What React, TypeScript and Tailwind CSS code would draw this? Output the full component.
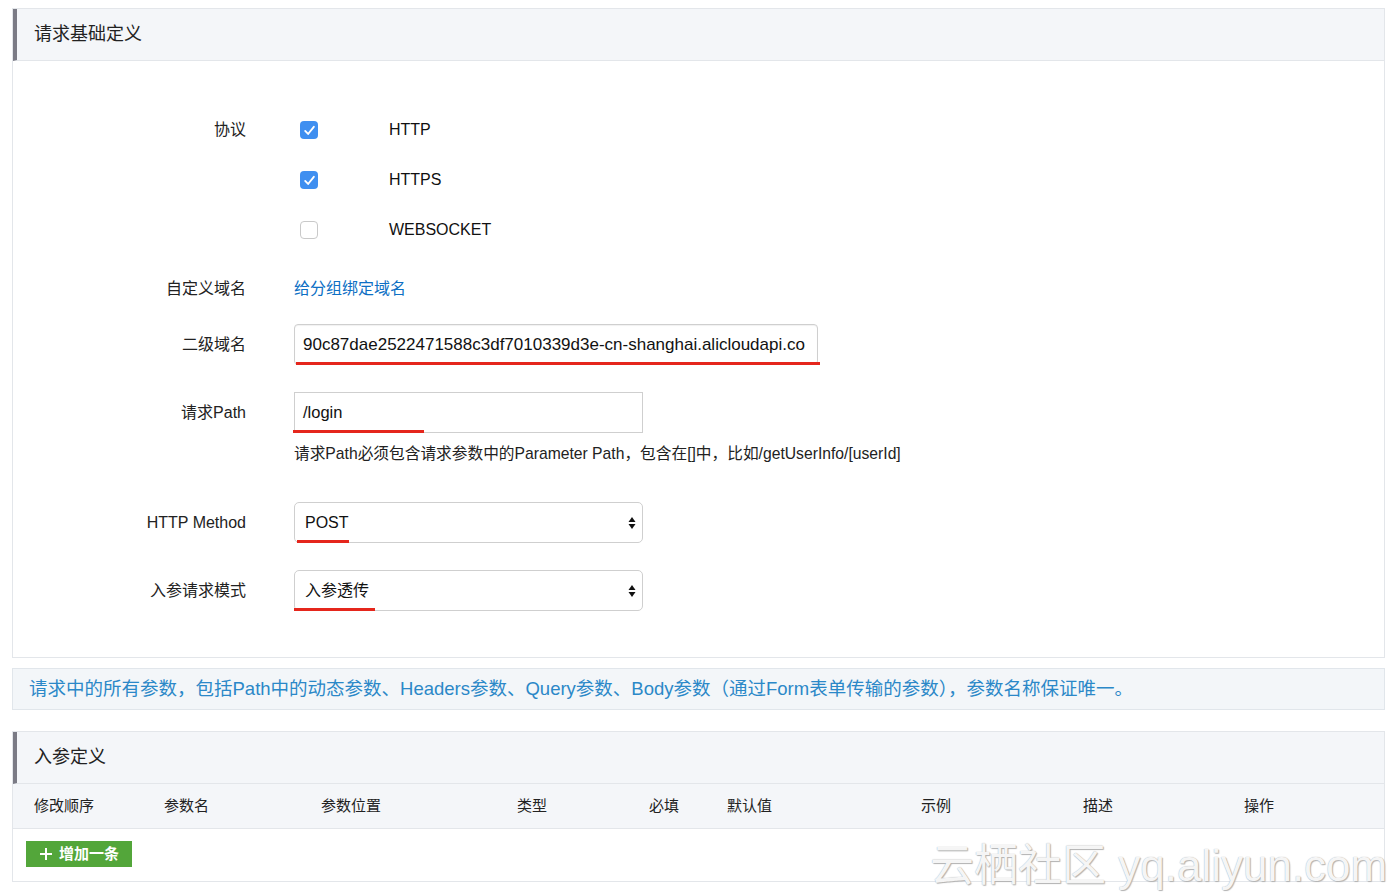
const FONT = "font-['Liberation_Sans','Noto_Sans_CJK_SC',sans-serif]";

const PROTOCOLS = [
  { name: 'HTTP', checked: true },
  { name: 'HTTPS', checked: true },
  { name: 'WEBSOCKET', checked: false },
];

const COLUMNS = ['修改顺序', '参数名', '参数位置', '类型', '必填', '默认值', '示例', '描述', '操作'];

function Checkbox({ checked }: { checked: boolean }) {
  if (!checked) {
    return <span className="block h-[18px] w-[18px] rounded-[4px] border border-[#c9c9c9] bg-white" />;
  }
  return (
    <span className="flex h-[18px] w-[18px] items-center justify-center rounded-[4px] bg-[#3f8ff0]">
      <svg width="13" height="13" viewBox="0 0 12 12" fill="none">
        <path d="M2 6.4 4.7 9.2 10 2.6" stroke="white" strokeWidth="1.7" strokeLinecap="round" strokeLinejoin="round" />
      </svg>
    </span>
  );
}

function SelectArrows() {
  return (
    <svg width="8" height="14" viewBox="0 0 8 14" className="absolute right-[6px] top-1/2 -translate-y-1/2">
      <path d="M4 1 7.5 6H0.5Z" fill="#111" />
      <path d="M4 13 7.5 8H0.5Z" fill="#111" />
    </svg>
  );
}

function Row({ label, className, children }: { label: string; className?: string; children: React.ReactNode }) {
  return (
    <div className={`grid grid-cols-[233px_1fr] gap-x-12 items-center ${className ?? ''}`}>
      <div className="text-right text-[16px] text-[#222]">{label}</div>
      <div>{children}</div>
    </div>
  );
}

function PanelHeader({ title }: { title: string }) {
  return (
    <div className="flex h-[52px] items-center border-b border-l-4 border-b-[#e3e6ea] border-l-[#7b7b85] bg-[#f4f6f9] pl-[17px] text-[18px] text-[#222]">
      {title}
    </div>
  );
}

export default function App() {
  return (
    <div className={`relative min-h-[895px] bg-white pl-3 pr-[15px] pt-2 ${FONT}`}>
      {/* 请求基础定义 */}
      <section className="border border-[#e3e6ea]">
        <PanelHeader title="请求基础定义" />
        <div className="pt-[44px] pb-[46px]">
          <div className="grid grid-cols-[233px_1fr] gap-x-12">
            <div className="flex h-[50px] items-center justify-end text-[16px] text-[#222]">协议</div>
            <div>
              {PROTOCOLS.map((p) => (
                <div key={p.name} className="flex h-[50px] items-center">
                  <span className="ml-[6px]">
                    <Checkbox checked={p.checked} />
                  </span>
                  <span className="ml-[71px] text-[16px] text-[#111]">{p.name}</span>
                </div>
              ))}
            </div>
          </div>

          <Row label="自定义域名" className="mt-[19px] h-[30px]">
            <span className="text-[16px] text-[#0d6fc4]">给分组绑定域名</span>
          </Row>

          <Row label="二级域名" className="mt-[20px]">
            <div className="relative w-[524px]">
              <div className="flex h-[41px] items-center overflow-hidden whitespace-nowrap rounded-[4px] border border-[#cfcfcf] bg-white pl-[8px] text-[17px] text-[#111] shadow-[inset_0_1px_1px_rgba(0,0,0,0.06)]">
                90c87dae2522471588c3df7010339d3e-cn-shanghai.alicloudapi.co
              </div>
              <div className="absolute left-[2px] top-[38px] h-[3px] w-[524px] bg-[#e5261c]" />
            </div>
          </Row>

          <Row label="请求Path" className="mt-[27px]">
            <div className="relative w-[349px]">
              <div className="flex h-[41px] items-center border border-[#cfcfcf] bg-white pl-[8px] text-[16.5px] text-[#111]">
                /login
              </div>
              <div className="absolute left-[-1px] top-[38px] h-[3px] w-[131px] bg-[#e5261c]" />
            </div>
          </Row>

          <Row label="" className="mt-[11px]">
            <div className="text-[15.7px] leading-[20px] text-[#222]">
              请求Path必须包含请求参数中的Parameter Path，包含在[]中，比如/getUserInfo/[userId]
            </div>
          </Row>

          <Row label="HTTP Method" className="mt-[38px]">
            <div className="relative w-[349px]">
              <div className="relative flex h-[41px] items-center rounded-[5px] border border-[#cfcfcf] bg-white pl-[10px] text-[16px] text-[#111]">
                POST
                <SelectArrows />
              </div>
              <div className="absolute left-[3px] top-[38px] h-[3px] w-[52px] bg-[#e5261c]" />
            </div>
          </Row>

          <Row label="入参请求模式" className="mt-[27px]">
            <div className="relative w-[349px]">
              <div className="relative flex h-[41px] items-center rounded-[5px] border border-[#cfcfcf] bg-white pl-[10px] text-[16px] text-[#111]">
                入参透传
                <SelectArrows />
              </div>
              <div className="absolute left-0 top-[38px] h-[3px] w-[81px] bg-[#e5261c]" />
            </div>
          </Row>
        </div>
      </section>

      {/* info bar */}
      <div className="mt-[10px] flex h-[42px] items-center whitespace-nowrap border border-[#e1e6eb] bg-[#f3f6f9] pl-[16px] text-[18.5px] text-[#2b88c8]">
        请求中的所有参数，包括Path中的动态参数、Headers参数、Query参数、Body参数（通过Form表单传输的参数），参数名称保证唯一。
      </div>

      {/* 入参定义 */}
      <section className="mt-[21px] border border-[#e3e6ea]">
        <PanelHeader title="入参定义" />
        <div className="grid h-[45px] grid-cols-[130px_157px_196px_132px_78px_194px_162px_161px_1fr] items-center border-b border-[#e3e6ea] bg-[#f4f6f9] pl-[21px] text-[15px] text-[#222]">
          {COLUMNS.map((c) => (
            <div key={c}>{c}</div>
          ))}
        </div>
        <div className="pl-[13px] pt-[12px] pb-[14px]">
          <button className="flex h-[26px] w-[106px] items-center justify-center gap-[6px] bg-[#53a63a] text-[15px] font-bold text-white">
            <svg width="14" height="14" viewBox="0 0 14 14">
              <path d="M7 1v12M1 7h12" stroke="white" strokeWidth="2" />
            </svg>
            增加一条
          </button>
        </div>
      </section>

      {/* watermark */}
      <div className="pointer-events-none absolute left-[930px] top-[840px] whitespace-nowrap text-[44px] leading-[52px] text-white/90 [text-shadow:0_0_1px_#9a9a9a,1px_1px_1px_#b5b5b5]">
        云栖社区 yq.aliyun.com
      </div>
    </div>
  );
}
